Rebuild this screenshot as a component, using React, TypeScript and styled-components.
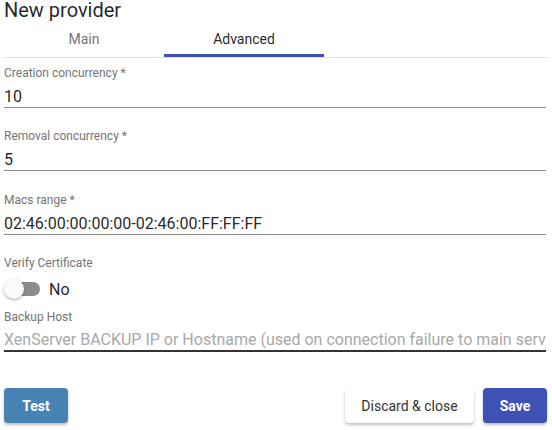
import styled, { createGlobalStyle } from 'styled-components'

const colors = {
  text: 'rgba(0, 0, 0, 0.87)',
  label: '#757575',
  line: '#8a8a8a',
  divider: '#e0e0e0',
  indigo: '#3f51b5',
  steel: '#4682b4',
}

const GlobalStyle = createGlobalStyle`
  html, body {
    margin: 0;
    padding: 0;
    background: #fff;
  }
  body {
    font-family: Roboto, "Liberation Sans", sans-serif;
    color: ${colors.text};
  }
`

const Page = styled.div`
  width: 552px;
  height: 430px;
  overflow: hidden;
  display: flex;
  flex-direction: column;
`

const Title = styled.h1`
  margin: 0;
  padding: 0 4px;
  font-size: 20px;
  font-weight: 400;
  line-height: 21px;
`

const Tabs = styled.div`
  display: flex;
  margin: 0 4px;
  border-bottom: 1px solid ${colors.divider};
`

const Tab = styled.div<{ $active?: boolean }>`
  width: 160px;
  height: 36px;
  box-sizing: border-box;
  display: flex;
  align-items: center;
  justify-content: center;
  padding-top: 2px;
  font-size: 14px;
  color: ${(p) => (p.$active ? colors.text : '#757575')};
  border-bottom: 3px solid ${(p) => (p.$active ? colors.indigo : 'transparent')};
`

const Form = styled.div`
  display: flex;
  flex-direction: column;
  padding: 0 6px 0 4px;
`

const Field = styled.div<{ $gap?: number }>`
  display: flex;
  flex-direction: column;
  margin-top: ${(p) => p.$gap ?? 21}px;
`

const Label = styled.div`
  font-size: 12px;
  line-height: 14px;
  color: ${colors.label};
`

const Input = styled.div<{ $placeholder?: boolean; $focused?: boolean }>`
  margin-top: 6px;
  font-size: 16px;
  line-height: 21px;
  height: 21px;
  white-space: nowrap;
  overflow: hidden;
  color: ${(p) => (p.$placeholder ? '#a8a8a8' : colors.text)};
  border-bottom: ${(p) => (p.$focused ? '2px solid #333' : `1px solid ${colors.line}`)};

  ${(p) =>
    p.$focused &&
    `
    height: 20px;
    line-height: 20px;
  `}
`

const SwitchRow = styled.div`
  display: flex;
  align-items: center;
  gap: 9px;
  height: 26px;
  margin-top: 6px;
  font-size: 16px;
`

const Switch = styled.div`
  position: relative;
  width: 36px;
  height: 14px;
  display: flex;
  align-items: center;
`

const Track = styled.div`
  width: 34px;
  height: 14px;
  margin-left: 2px;
  border-radius: 7px;
  background: #8c8c8c;
`

const Thumb = styled.div`
  position: absolute;
  left: 0;
  top: -3px;
  width: 20px;
  height: 20px;
  border-radius: 50%;
  background: #fafafa;
  box-shadow: 0 1px 3px rgba(0, 0, 0, 0.35);
`

const Actions = styled.div`
  display: flex;
  align-items: center;
  gap: 9px;
  padding: 0 5px 0 4px;
  margin-top: 36px;
`

const Spacer = styled.div`
  flex: 1;
`

const Button = styled.button<{ $bg: string; $fg: string; $bold?: boolean; $width: number }>`
  width: ${(p) => p.$width}px;
  height: 35px;
  padding: 0;
  border: none;
  border-radius: 4px;
  white-space: nowrap;
  font-family: Roboto, "Liberation Sans", sans-serif;
  font-size: 14px;
  font-weight: ${(p) => (p.$bold ? 700 : 400)};
  background: ${(p) => p.$bg};
  color: ${(p) => p.$fg};
  box-shadow: 0 2px 3px rgba(0, 0, 0, 0.25);
  cursor: pointer;
`

export default function App() {
  return (
    <Page>
      <GlobalStyle />
      <Title>New provider</Title>
      <Tabs>
        <Tab>Main</Tab>
        <Tab $active>Advanced</Tab>
      </Tabs>
      <Form>
        <Field $gap={8}>
          <Label>Creation concurrency *</Label>
          <Input>10</Input>
        </Field>
        <Field>
          <Label>Removal concurrency *</Label>
          <Input>5</Input>
        </Field>
        <Field $gap={22}>
          <Label>Macs range *</Label>
          <Input>02:46:00:00:00:00-02:46:00:FF:FF:FF</Input>
        </Field>
        <Field>
          <Label>Verify Certificate</Label>
          <SwitchRow>
            <Switch>
              <Track />
              <Thumb />
            </Switch>
            No
          </SwitchRow>
        </Field>
        <Field $gap={8}>
          <Label>Backup Host</Label>
          <Input $placeholder $focused>
            XenServer BACKUP IP or Hostname (used on connection failure to main server)
          </Input>
        </Field>
      </Form>
      <Actions>
        <Button $bg={colors.steel} $fg="#fff" $bold $width={64}>
          Test
        </Button>
        <Spacer />
        <Button $bg="#fff" $fg="#333" $width={129}>
          Discard &amp; close
        </Button>
        <Button $bg={colors.indigo} $fg="#fff" $bold $width={64}>
          Save
        </Button>
      </Actions>
    </Page>
  )
}
